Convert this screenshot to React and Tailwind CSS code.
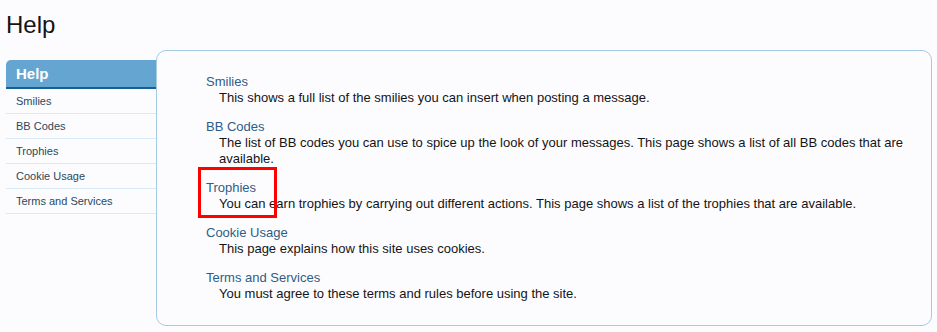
import React from 'react';

const topics = [
  { title: 'Smilies', text: ['This shows a full list of the smilies you can insert when posting a message.'] },
  {
    title: 'BB Codes',
    text: ['The list of BB codes you can use to spice up the look of your messages. This page shows a list of all BB codes that are', 'available.'],
  },
  {
    title: 'Trophies',
    text: ['You can earn trophies by carrying out different actions. This page shows a list of the trophies that are available.'],
    marked: true,
  },
  { title: 'Cookie Usage', text: ['This page explains how this site uses cookies.'] },
  { title: 'Terms and Services', text: ['You must agree to these terms and rules before using the site.'] },
];

export default function App() {
  return (
    <div className="w-[937px] h-[332px] bg-[#fcfcff] overflow-hidden font-['Liberation_Sans',sans-serif]">
      <h1 className="pl-[6px] pt-[10px] h-[50px] text-[24px] leading-[30px] text-[#141414]">Help</h1>

      <div className="flex pr-[5px]">
        {/* Sidebar */}
        <div className="w-[150px] ml-[6px] mt-[10px] shrink-0">
          <div className="h-[29px] bg-[#65a5d1] border-b-2 border-[#176093] rounded-tl-[5px] pl-[10px] text-white font-bold text-[15px] leading-[27px]">
            Help
          </div>
          <ul className="text-[11px] text-[#2b485c]">
            {topics.map((t) => (
              <li key={t.title} className="h-[25px] pl-[10px] leading-[24px] border-b border-[#d8eaf7]">
                {t.title}
              </li>
            ))}
          </ul>
        </div>

        {/* Content */}
        <div className="flex-1 h-[276px] border border-[#a5cae4] rounded-[10px] pl-[49px] pt-[23px]">
          {topics.map((t) => (
            <div key={t.title} className="relative mb-[13px] text-[13px] leading-[16px]">
              <div className="text-[#2f5d86]">{t.title}</div>
              {t.text.map((line) => (
                <div key={line} className="pl-[13px] text-[#141414]">
                  {line}
                </div>
              ))}
              {t.marked && (
                <div className="absolute left-[-8px] top-[-13px] w-[79px] h-[51px] border-[3px] border-[#f00]" />
              )}
            </div>
          ))}
        </div>
      </div>
    </div>
  );
}
